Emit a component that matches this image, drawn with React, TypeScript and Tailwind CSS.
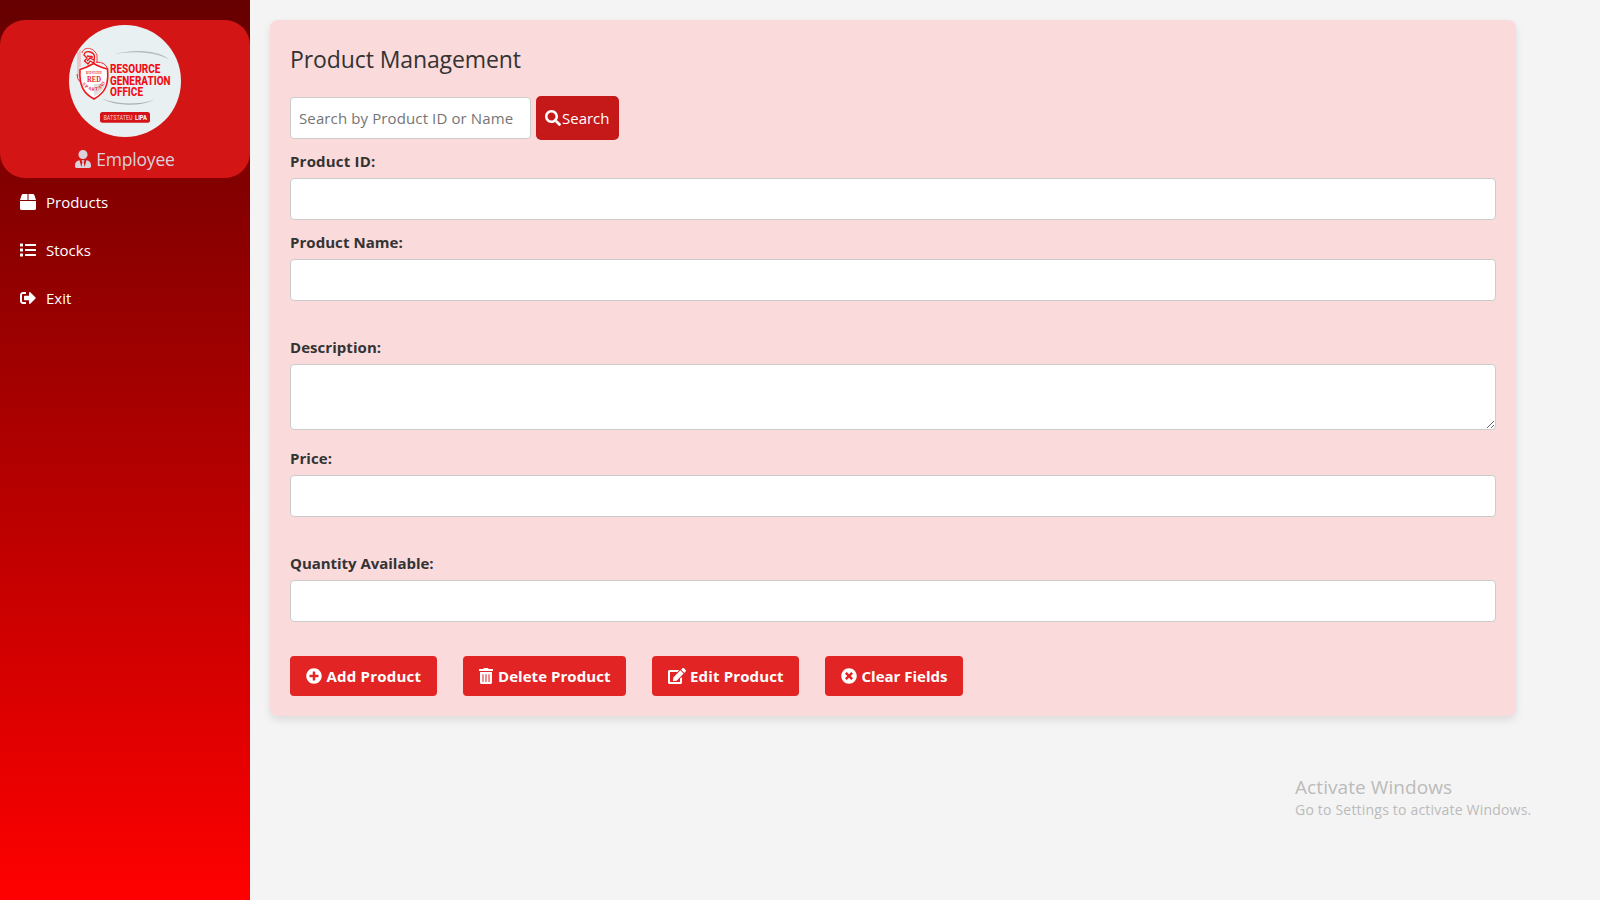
import type { ReactNode } from "react";
import { FaBox, FaList, FaSearch, FaUserTie, FaSignOutAlt, FaPlusCircle, FaTimesCircle, FaTrashAlt, FaEdit } from "react-icons/fa";

function Logo() {
  return (
    <svg viewBox="0 0 112 112" className="block size-28">
      <circle cx="56" cy="56" r="56" fill="#e9f0f2" />
      <path d="M45 29.500 C60 24.500 88 24 100 34.500 C86 26.500 62 25.500 45 29.500Z" fill="#b5bbbb" />
      <path d="M33 73.500 C46 81.500 72 81.500 85 75 C70 80 48 80 33 73.500Z" fill="#a5abab" />
      <g fill="none" stroke="#f0171c" strokeWidth="1">
        <path d="M11 25 V42 M9 27 V52" strokeWidth=".7" opacity=".55" />
        <path d="M13 28 C14 22 24 21 28 30 L28 38" strokeWidth=".8" />
        <path d="M15 30 C16 25 24 26 25.500 31 L25 38 L21 36 L19 39 L15.500 36 L18 33Z M18 31 L24 32 M18 36 L23 31 M21 33 L25 35" strokeWidth="1.3" />
        <path d="M11 44.500 C17 43 20 41 24.500 38.500 C29 41 33 43 38.500 44 C40 60 36 68 25 74 C14 68 10 60 11 44.500Z" fill="#fff" strokeWidth="1.6" />
        <path d="M27 37 Q37 37 38.500 44 M8 49 Q8 54 11 57" strokeWidth=".9" />
      </g>
      <path d="M25 59 H36.500 Q34 67 25 71.500Z" fill="#dde1e3" />
      <g fill="#e91d24" fontFamily="Liberation Serif, serif" fontWeight="bold">
        <text x="17" y="49" fontSize="3" textLength="16" lengthAdjust="spacingAndGlyphs">BATSTATEU</text>
        <text x="18" y="57" fontSize="7.500" textLength="14" lengthAdjust="spacingAndGlyphs">RED</text>
        <text fontSize="4.800" x="13 15.500 18.600 22.200 26 29.500 32 34.500" y="59 62 64.300 65.500 65.500 64.500 62.500 60" rotate="50 35 20 5 -5 -20 -35 -50">SPARTANS</text>
      </g>
      <g fill="#f20d14" fontFamily="Roboto, sans-serif" fontWeight="800" fontSize="13.500">
        <text x="41" y="48" textLength="50.500" lengthAdjust="spacingAndGlyphs">RESOURCE</text>
        <text x="41" y="59.500" textLength="60.500" lengthAdjust="spacingAndGlyphs">GENERATION</text>
        <text x="41" y="71" textLength="33" lengthAdjust="spacingAndGlyphs">OFFICE</text>
      </g>
      <rect x="31" y="87" width="50" height="10.700" rx="2.500" fill="#d5141a" />
      <g fill="#fff" fontFamily="Roboto, sans-serif" fontSize="8">
        <text x="34.500" y="95.200" textLength="29" lengthAdjust="spacingAndGlyphs" fill="#ffd0d0">BATSTATEU</text>
        <text x="66" y="95.200" textLength="12" lengthAdjust="spacingAndGlyphs" fontWeight="700">LIPA</text>
      </g>
    </svg>
  );
}

function NavItem({ icon, children }: { icon: ReactNode; children: ReactNode }) {
  return (
    <a className="flex h-12 items-center gap-2.5 pl-5 text-[15px] text-white">
      {icon}
      <span>{children}</span>
    </a>
  );
}

function Label({ tracking = "tracking-[0.05px]", children }: { tracking?: string; children: ReactNode }) {
  return <label className={`block h-6 text-[15px] leading-6 font-bold ${tracking}`}>{children}</label>;
}

const field = "block h-[42px] w-full rounded-[4px] border border-[#ccc] bg-white px-2";

function Action({ icon, width, children }: { icon: ReactNode; width: string; children: ReactNode }) {
  return (
    <button className={`flex h-10 items-center rounded-[4px] bg-[#e22424] text-[15px] font-bold whitespace-nowrap text-white ${width}`}>
      {icon}
      <span>{children}</span>
    </button>
  );
}

export default function App() {
  return (
    <div className="relative flex h-[900px] w-[1600px] overflow-hidden bg-[#f4f4f4] font-['Open_Sans',sans-serif] text-[#333]">
      <aside className="h-full w-[250px] shrink-0 bg-linear-to-b from-[#660000] to-[#ff0000] pt-5">
        <div className="flex h-[158px] flex-col items-center rounded-[25px] bg-[#d31515] pt-[5px]">
          <Logo />
          <div className="mt-[7px] flex h-[30px] items-center gap-[5px] text-[17.500px] tracking-[-0.2px] text-[#d9d2dc]">
            <FaUserTie size={18} className="h-[18px] w-4" preserveAspectRatio="none" />
            <span>Employee</span>
          </div>
        </div>
        <nav>
          <NavItem icon={<FaBox size={16} />}>Products</NavItem>
          <NavItem icon={<FaList size={16} />}>Stocks</NavItem>
          <NavItem icon={<FaSignOutAlt size={16} />}>Exit</NavItem>
        </nav>
      </aside>
      <main className="ml-5 mt-5 h-[696px] w-[1246px] rounded-[8px] bg-[#fadadb] px-5 pt-5 shadow-[0_4px_8px_rgba(0,0,0,0.1)]">
        <h1 className="h-14 text-[23px] leading-[38px] tracking-[-0.1px]">Product Management</h1>
        <div className="flex h-11 items-center gap-[5px]">
          <input placeholder="Search by Product ID or Name" className="h-[42px] w-[241px] rounded-[4px] border border-[#ccc] bg-white px-2 text-[15px] tracking-[0.12px] placeholder:text-[#757575]" />
          <button className="flex h-11 w-[83px] items-center rounded-[5px] bg-[#c51818] pl-[9px] text-[15px] text-white">
            <FaSearch size={16} />
            <span className="pl-px">Search</span>
          </button>
        </div>
        <div className="pt-[9px]"><Label tracking="tracking-[0.2px]">Product ID:</Label><input className={`mt-[5px] ${field}`} /></div>
        <div className="pt-[10px]"><Label>Product Name:</Label><input className={`mt-[5px] ${field}`} /></div>
        <div className="pt-[34px]"><Label>Description:</Label><textarea className="mt-[5px] block h-[66px] w-full resize rounded-[4px] border border-[#ccc] bg-white" /></div>
        <div className="pt-4"><Label>Price:</Label><input className={`mt-[5px] ${field}`} /></div>
        <div className="pt-[34px]"><Label tracking="tracking-[-0.03px]">Quantity Available:</Label><input className={`mt-[5px] ${field}`} /></div>
        <div className="mt-[34px] flex gap-[26px]">
          <Action width="w-[147px] gap-[4.5px] pl-4 tracking-[0.22px]" icon={<FaPlusCircle size={16} />}>Add Product</Action>
          <Action width="w-[163px] gap-[5px] pl-4 tracking-[0.05px]" icon={<FaTrashAlt size={16} className="h-4 w-3.5" />}>Delete Product</Action>
          <Action width="w-[147px] gap-[4px] pl-4 tracking-[0.15px]" icon={<FaEdit size={18} />}>Edit Product</Action>
          <Action width="w-[138px] gap-[4.5px] pl-4 tracking-normal" icon={<FaTimesCircle size={16} />}>Clear Fields</Action>
        </div>
      </main>
      <div className="absolute left-[1295px] top-[774px] text-[#bbb]">
        <div className="text-[19px] leading-[26px] tracking-[0.08px]">Activate Windows</div>
        <div className="text-[14px] leading-5 tracking-[0.2px]">Go to Settings to activate Windows.</div>
      </div>
    </div>
  );
}
